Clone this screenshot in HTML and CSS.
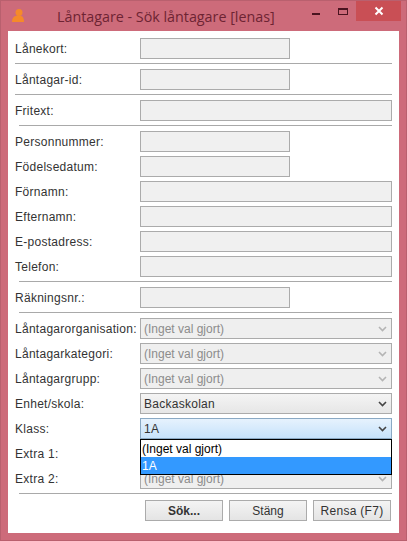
FILE: index.html
```html
<!DOCTYPE html>
<html lang="sv">
<head>
<meta charset="utf-8">
<title>Låntagare - Sök låntagare [lenas]</title>
<link rel="stylesheet" href="styles.css">
</head>
<body>
<div class="window">
  <header class="titlebar">
    <svg class="app-icon" width="18" height="16" viewBox="0 0 18 16"><circle cx="11" cy="4.500" r="3.500" fill="#f58a2a"/><path d="M4 14c0-4.500 2.500-6.500 6.500-6.500s5.500 2 5.500 6.500z" fill="#f58a2a"/></svg>
    <div class="title">Låntagare - Sök låntagare [lenas]</div>
    <div class="controls">
      <div class="ctl"><svg width="10" height="10" viewBox="0 0 10 10"><rect x="1" y="7" width="8" height="2" fill="#4a1420"/></svg></div>
      <div class="ctl"><svg width="12" height="10" viewBox="0 0 12 10"><rect x="1.500" y="2.500" width="9" height="6" fill="none" stroke="#4a1420" stroke-width="1"/><rect x="1" y="2" width="10" height="2" fill="#4a1420"/></svg></div>
      <div class="ctl close"><svg width="10" height="10" viewBox="0 0 10 10"><path d="M1.500 1.500l7 7M8.500 1.500l-7 7" stroke="#fff" stroke-width="2"/></svg></div>
    </div>
  </header>
  <main class="client">
    <div class="row"><label>Lånekort:</label><div class="input short"></div></div>
    <hr class="sep">
    <div class="row"><label>Låntagar-id:</label><div class="input short"></div></div>
    <hr class="sep">
    <div class="row"><label>Fritext:</label><div class="input"></div></div>
    <hr class="sep inset">
    <section class="group">
      <div class="row"><label>Personnummer:</label><div class="input short"></div></div>
      <div class="row"><label>Födelsedatum:</label><div class="input short"></div></div>
      <div class="row"><label>Förnamn:</label><div class="input"></div></div>
      <div class="row"><label>Efternamn:</label><div class="input"></div></div>
      <div class="row"><label>E-postadress:</label><div class="input"></div></div>
      <div class="row"><label>Telefon:</label><div class="input"></div></div>
    </section>
    <hr class="sep inset">
    <div class="row"><label>Räkningsnr.:</label><div class="input short"></div></div>
    <hr class="sep inset">
    <section class="group">
      <div class="row"><label>Låntagarorganisation:</label><div class="select off"><span>(Inget val gjort)</span><svg class="chev" width="9" height="6" viewBox="0 0 9 6"><path d="M1 1l3.500 3.500L8 1" fill="none" stroke="#b4b4b4" stroke-width="1.600"/></svg></div></div>
      <div class="row"><label>Låntagarkategori:</label><div class="select off"><span>(Inget val gjort)</span><svg class="chev" width="9" height="6" viewBox="0 0 9 6"><path d="M1 1l3.500 3.500L8 1" fill="none" stroke="#b4b4b4" stroke-width="1.600"/></svg></div></div>
      <div class="row"><label>Låntagargrupp:</label><div class="select off"><span>(Inget val gjort)</span><svg class="chev" width="9" height="6" viewBox="0 0 9 6"><path d="M1 1l3.500 3.500L8 1" fill="none" stroke="#b4b4b4" stroke-width="1.600"/></svg></div></div>
      <div class="row"><label>Enhet/skola:</label><div class="select on"><span>Backaskolan</span><svg class="chev" width="9" height="6" viewBox="0 0 9 6"><path d="M1 1l3.500 3.500L8 1" fill="none" stroke="#444" stroke-width="1.600"/></svg></div></div>
      <div class="row"><label>Klass:</label><div class="select open"><span>1A</span><svg class="chev" width="9" height="6" viewBox="0 0 9 6"><path d="M1 1l3.500 3.500L8 1" fill="none" stroke="#444" stroke-width="1.600"/></svg></div>
        <ul class="dropdown"><li>(Inget val gjort)</li><li class="sel">1A</li></ul>
      </div>
      <div class="row"><label>Extra 1:</label><div class="select off"></div></div>
      <div class="row"><label>Extra 2:</label><div class="select off"><span>(Inget val gjort)</span><svg class="chev" width="9" height="6" viewBox="0 0 9 6"><path d="M1 1l3.500 3.500L8 1" fill="none" stroke="#b4b4b4" stroke-width="1.600"/></svg></div></div>
    </section>
    <hr class="sep inset foot">
    <footer class="buttons">
      <button class="btn primary">Sök...</button>
      <button class="btn">Stäng</button>
      <button class="btn wide">Rensa (F7)</button>
    </footer>
  </main>
</div>
</body>
</html>
```
FILE: styles.css
```css
* { box-sizing: border-box; }
html, body { margin: 0; padding: 0; }
body { width: 407px; height: 541px; overflow: hidden; font-family: "Liberation Sans", Arial, sans-serif; font-size: 12px; color: #333; }
.window { width: 407px; height: 541px; background: #cd6b7a; padding: 0 7px 7px; display: flex; flex-direction: column; border: 1px solid #b9606e; }
.titlebar { height: 30px; display: flex; align-items: flex-start; margin: 0 -7px; flex: none; }
.app-icon { margin: 7px 0 0 7px; flex: none; }
.title { flex: none; margin: 6px 0 0 31px; font-family: "Open Sans", sans-serif; font-size: 14.300px; line-height: 20px; color: #6d2433; white-space: nowrap; }
.controls { display: flex; margin-left: auto; margin-right: 5px; }
.ctl { width: 27px; height: 20px; display: flex; align-items: center; justify-content: center; }
.close { width: 45px; background: #c94f55; }
.client { flex: 1; background: #fff; padding: 7px 7px 0; display: flex; flex-direction: column; }
.sep { height: 1px; border: 0; margin: 4px 0 5px; background: #a9a9a9; flex: none; width: 100%; }
.sep.inset { margin-left: 4px; width: calc(100% - 4px); }
.sep.foot { margin-bottom: 6px; }
.group { display: flex; flex-direction: column; gap: 4px; }
.row { display: flex; align-items: center; height: 21px; position: relative; flex: none; }
label { width: 125px; flex: none; white-space: nowrap; font-size: 12px; letter-spacing: 0.27px; }
.input { flex: 1; height: 21px; background: #f0f0f0; border: 1px solid #ababab; }
.input.short { flex: none; width: 150px; }
.select { flex: 1; height: 21px; border: 1px solid #ababab; display: flex; align-items: center; justify-content: space-between; padding: 0 3px; }
.chev { flex: none; margin-right: 1px; }
.off { background: #efefef; color: #8c8c8c; }
.on { background: linear-gradient(#f4f4f4, #e6e6e6); color: #333; letter-spacing: 0.27px; }
.open { background: linear-gradient(#e6f2fd, #c6e2fb); border-color: #8aa9c4; color: #333; letter-spacing: 0.27px; }
.dropdown { position: absolute; left: 125px; right: 0; top: 21px; z-index: 5; margin: 0; padding: 0; list-style: none; background: #fff; border: 1px solid #000; color: #000; }
.dropdown li { height: 17px; line-height: 17px; padding: 1px 0 0 1px; }
.dropdown .sel { background: #3399ff; color: #fff; }
.buttons { display: flex; justify-content: flex-end; gap: 6px; margin-right: 1px; }
.btn { width: 78px; height: 21px; padding: 0; border: 1px solid #ababab; background: linear-gradient(#f4f4f4, #e4e4e4); font-family: "Liberation Sans", Arial, sans-serif; font-size: 12px; color: #333; }
.primary { font-weight: bold; }
.wide { letter-spacing: 0.3px; }
```
